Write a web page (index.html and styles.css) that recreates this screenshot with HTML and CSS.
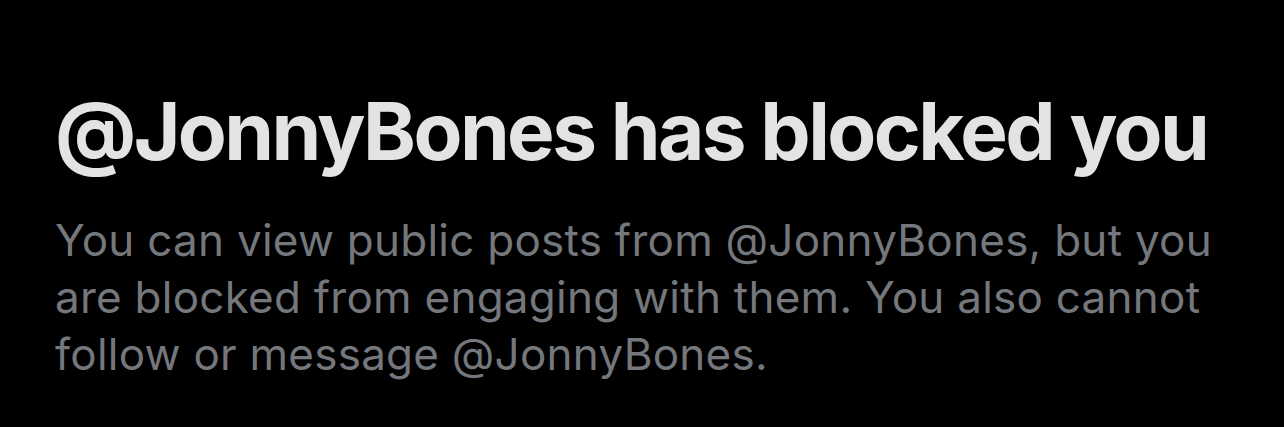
FILE: index.html
```html
<!DOCTYPE html>
<html lang="en">
<head>
<meta charset="utf-8">
<title>Blocked</title>
<link rel="stylesheet" href="styles.css">
</head>
<body>
<main class="notice">
  <h1 class="title">@JonnyBones has blocked you</h1>
  <p class="desc">You can view public posts from @JonnyBones, but you<br>are blocked from engaging with them. You also cannot<br>follow or message @JonnyBones.</p>
</main>
</body>
</html>
```
FILE: styles.css
```css
html, body {
  margin: 0;
  padding: 0;
  background: #000;
  height: 100%;
}
.notice {
  padding: 91px 0 0 55px;
  display: flex;
  flex-direction: column;
  gap: 41px;
}
.title {
  margin: 0;
  font-family: Inter, "Liberation Sans", Arial, sans-serif;
  font-weight: 700;
  font-size: 80px;
  line-height: 80px;
  letter-spacing: -2.6px;
  color: #e3e3e3;
  white-space: nowrap;
}
.desc {
  margin: 0;
  font-family: Inter, "Liberation Sans", Arial, sans-serif;
  font-size: 44px;
  line-height: 57px;
  letter-spacing: 0.25px;
  color: #74777c;
  white-space: nowrap;
}
```
